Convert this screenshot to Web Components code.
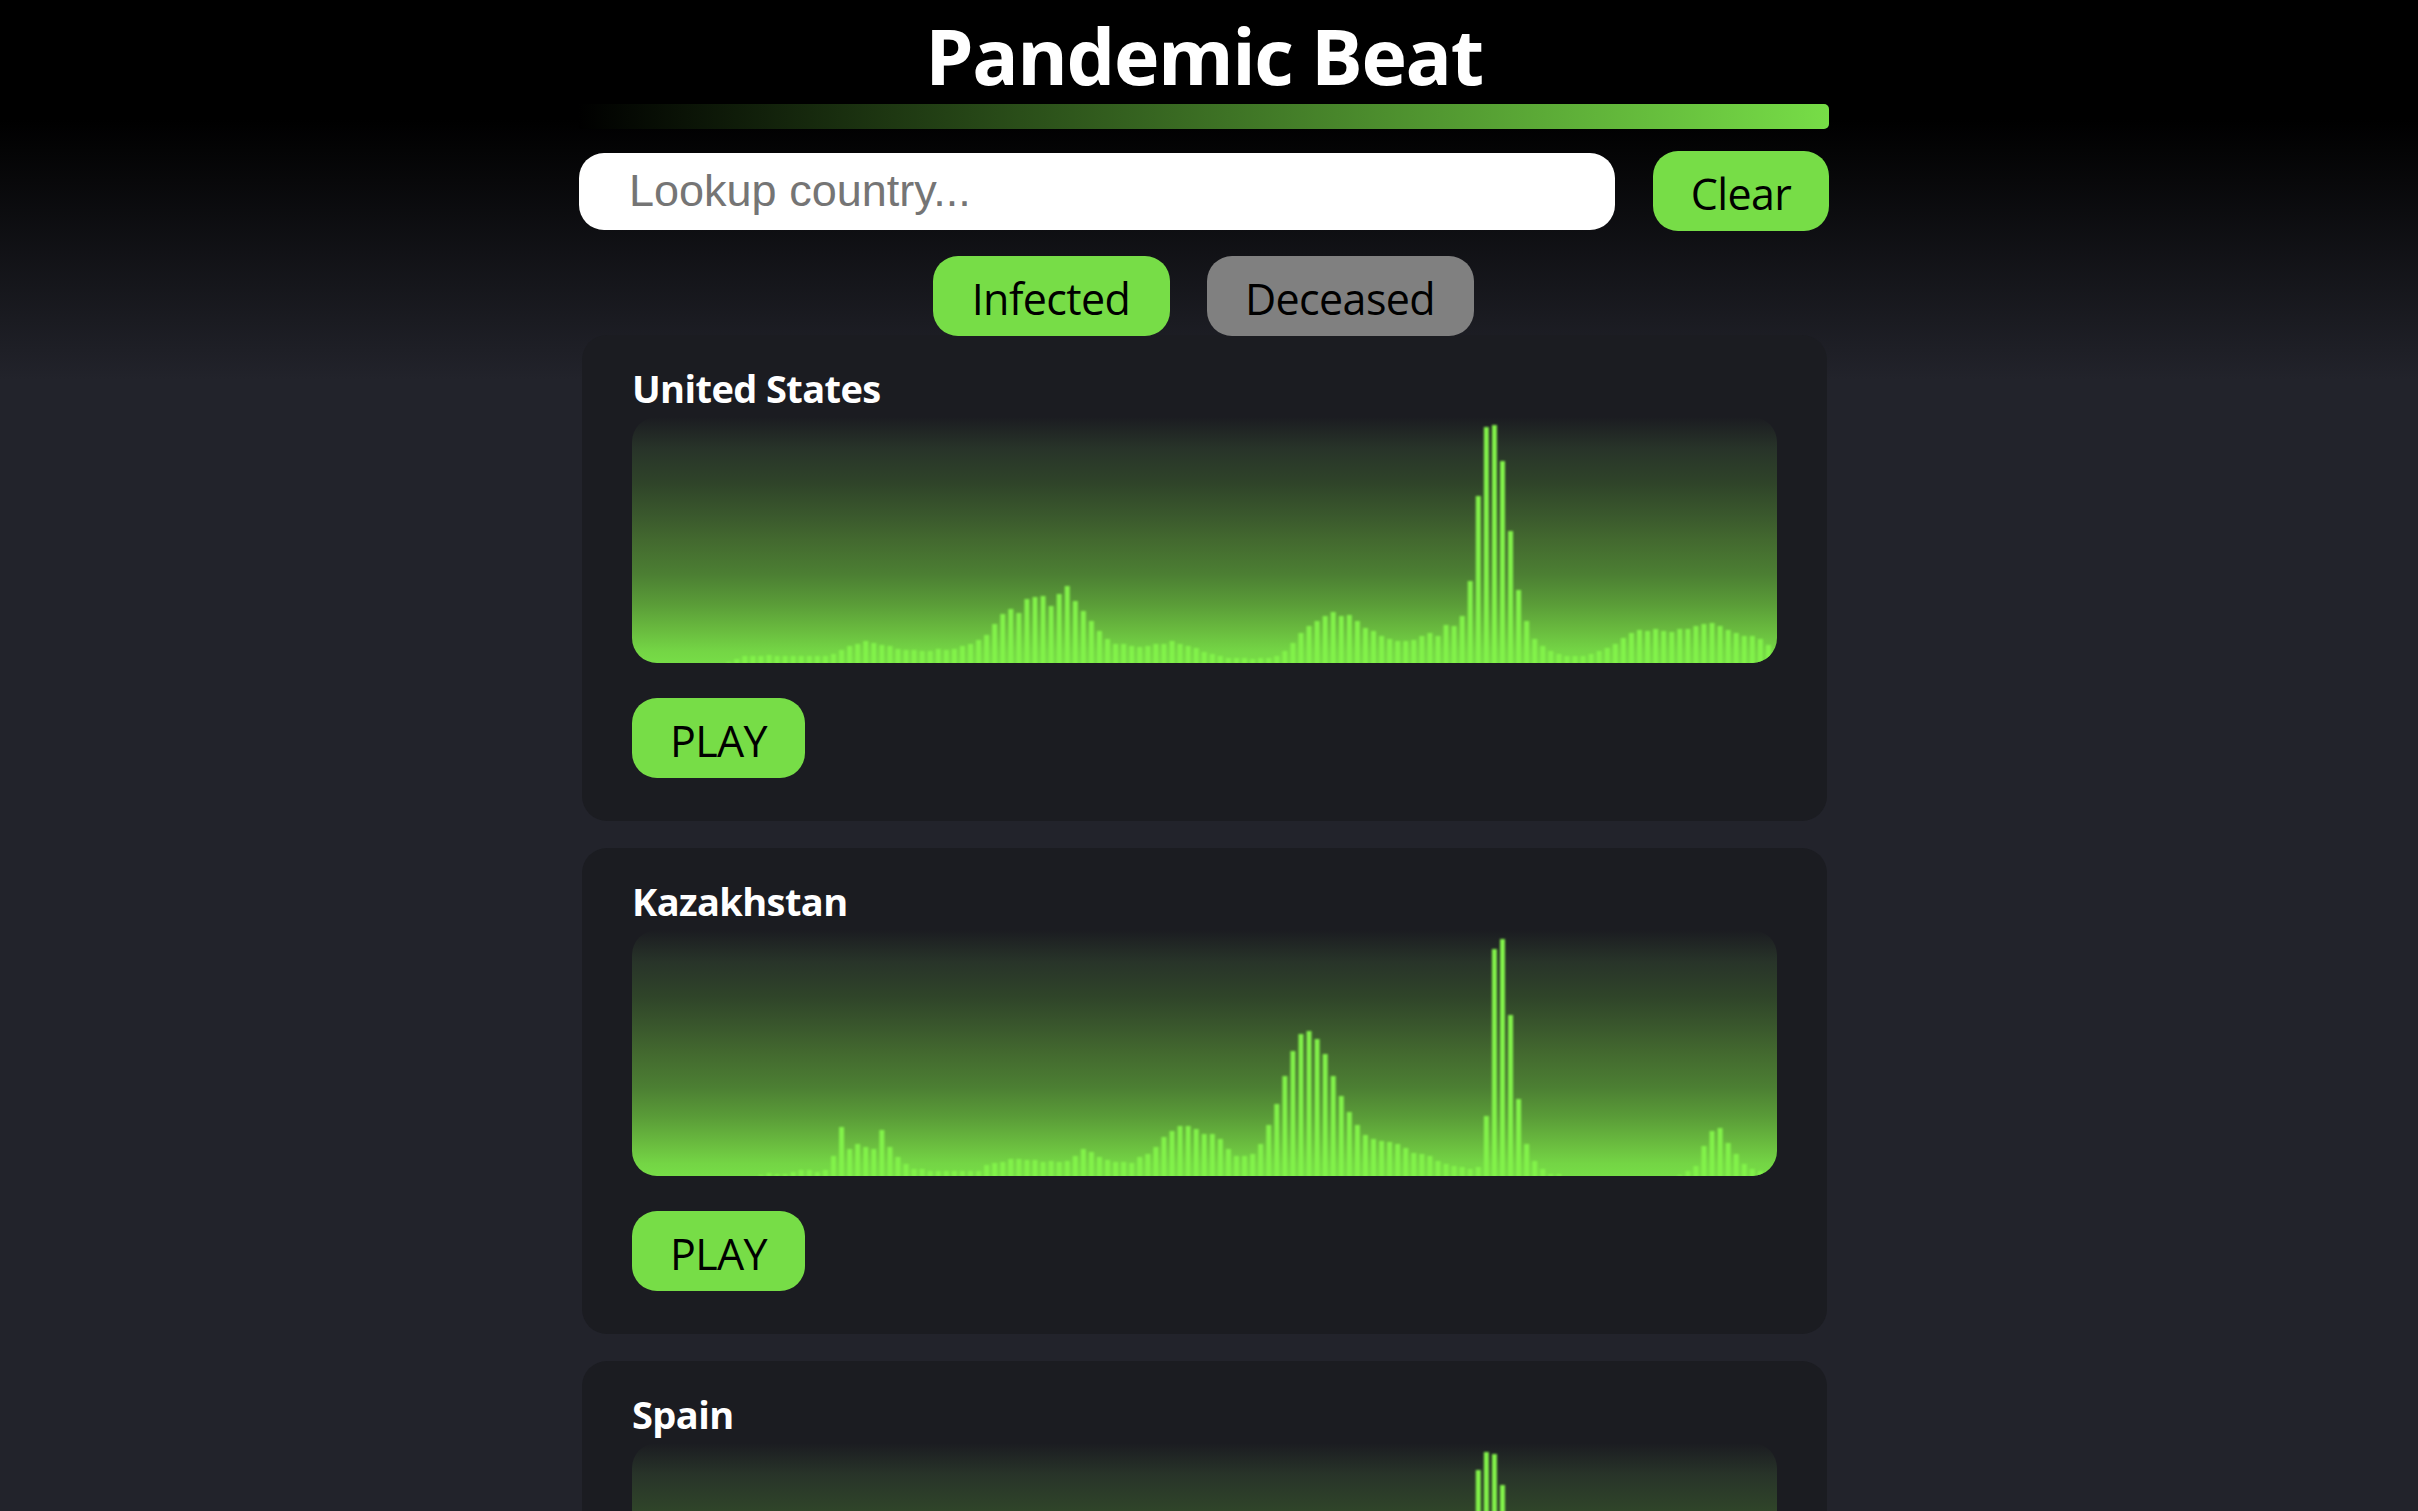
<!DOCTYPE html>
<html lang="en">
<head>
<meta charset="utf-8">
<title>Pandemic Beat</title>
<style>
    html, body { height: 100%; overflow: hidden; }
    body {
        margin: 0;
        padding-right: 10px;
        box-sizing: border-box;
        background: linear-gradient(#000 120px, #22232b 380px);
        color: #fff;
        font-family: "Open Sans", "Noto Sans", sans-serif;
    }
</style>
</head>
<body>
<pandemic-app>
    <search-bar></search-bar>
    <tab-row>
        <pill-button style="width:237px">Infected</pill-button>
        <pill-button muted style="width:267px">Deceased</pill-button>
    </tab-row>
    <country-card name="United States">
        <beat-chart start="12" bars="1 4 7 7 7 8 7 7 7 7 7 7 7 9 13 17 19 22 20 18 17 14 13 13 12 12 14 13 14 17 19 23 28 39 49 54 50 64 66 67 57 69 77 62 52 42 32 24 19 19 17 16 17 19 19 22 19 17 15 11 9 7 5 5 5 4 5 5 7 12 20 30 37 42 47 51 47 48 42 35 32 27 24 22 22 23 27 30 27 38 37 47 82 167 236 238 202 132 73 42 24 17 12 9 7 7 7 9 12 15 19 25 30 33 32 34 32 31 34 34 37 39 40 37 33 30 27 27 24 18"></beat-chart>
        <pill-button slot="action" style="width:173px">PLAY</pill-button>
    </country-card>
    <country-card name="Kazakhstan">
        <beat-chart start="15" bars="0 1 3 2 2 4 6 6 4 6 20 49 27 32 29 27 46 29 19 12 7 7 5 5 5 5 5 5 5 11 13 14 17 17 16 16 14 15 14 15 20 27 24 19 16 14 14 13 19 22 29 39 45 50 50 47 42 42 37 27 20 20 22 32 51 72 100 125 142 145 137 122 100 80 64 51 41 37 35 34 32 28 23 22 20 15 12 10 9 7 9 60 227 237 161 77 32 15 7 2 2 0 0 0 0 0 0 0 0 0 0 0 0 0 0 1 5 10 30 45 48 33 22 12 7 5 3"></beat-chart>
        <pill-button slot="action" style="width:173px">PLAY</pill-button>
    </country-card>
    <country-card name="Spain">
        <beat-chart start="105" bars="219 237 235 204"></beat-chart>
    </country-card>
</pandemic-app>

<script>
class PandemicApp extends HTMLElement {
    constructor() {
        super();
        this.attachShadow({ mode: 'open' });
        this.shadowRoot.innerHTML = `
            <style>
                :host {
                    display: block;
                    width: 1250px;
                    margin: 0 auto;
                }
                h1 {
                    margin: 0;
                    height: 104px;
                    font-size: 77px;
                    font-weight: 700;
                    line-height: 112px;
                    letter-spacing: -1.4px;
                    text-align: center;
                    color: #fff;
                }
                .rule {
                    height: 25px;
                    border-radius: 0 5px 5px 0;
                    background: linear-gradient(to right, #000, #77dd47);
                }
            </style>
            <h1>Pandemic Beat</h1>
            <div class="rule"></div>
            <slot></slot>
        `;
    }
}

class SearchBar extends HTMLElement {
    constructor() {
        super();
        this.attachShadow({ mode: 'open' });
        this.shadowRoot.innerHTML = `
            <style>
                :host {
                    display: flex;
                    align-items: center;
                    justify-content: space-between;
                    margin-top: 22px;
                }
                input {
                    width: 1036px;
                    height: 77px;
                    box-sizing: border-box;
                    padding: 0 0 0 50px;
                    border: 0;
                    border-radius: 25px;
                    background: #fff;
                    font: 45px "Liberation Sans", Arial, sans-serif;
                }
            </style>
            <input type="text" placeholder="Lookup country...">
            <pill-button style="width:176px">Clear</pill-button>
        `;
    }
}

class TabRow extends HTMLElement {
    constructor() {
        super();
        this.attachShadow({ mode: 'open' });
        this.shadowRoot.innerHTML = `
            <style>
                :host {
                    display: flex;
                    justify-content: center;
                    gap: 37px;
                    position: relative;
                    z-index: 1;
                    margin: 25px 0 -1px;
                    padding-right: 2px;
                }
            </style>
            <slot></slot>
        `;
    }
}

class PillButton extends HTMLElement {
    constructor() {
        super();
        this.attachShadow({ mode: 'open' });
        this.shadowRoot.innerHTML = `
            <style>
                :host {
                    display: inline-flex;
                    align-items: center;
                    justify-content: center;
                    height: 80px;
                    box-sizing: border-box;
                    padding-top: 5px;
                    border-radius: 25px;
                    background: #77dd47;
                    color: #000;
                    font-size: 43px;
                    letter-spacing: -.6px;
                    cursor: pointer;
                }
                :host([muted]) { background: #808080; }
            </style>
            <slot></slot>
        `;
    }
}

class CountryCard extends HTMLElement {
    constructor() {
        super();
        this.attachShadow({ mode: 'open' });
        this.shadowRoot.innerHTML = `
            <style>
                :host {
                    display: block;
                    margin: 0 2px 27px 3px;
                    padding: 0 50px 43px;
                    border-radius: 25px;
                    background: #1b1c21;
                }
                h2 {
                    margin: 0;
                    height: 82px;
                    font-size: 38px;
                    font-weight: 700;
                    line-height: 106px;
                    letter-spacing: -.6px;
                    color: #fff;
                }
                ::slotted([slot="action"]) { margin-top: 35px; }
            </style>
            <h2></h2>
            <slot></slot>
            <slot name="action"></slot>
        `;
    }

    connectedCallback() {
        this.shadowRoot.querySelector('h2').textContent = this.getAttribute('name');
    }
}

// Draws the per-day bars over the fade; heights are in px from the chart floor
class BeatChart extends HTMLElement {
    constructor() {
        super();
        this.attachShadow({ mode: 'open' });
        this.shadowRoot.innerHTML = `
            <style>
                :host {
                    display: block;
                    height: 246px;
                    border-radius: 25px;
                    overflow: hidden;
                    background: linear-gradient(#1b1c21, #283429 13%, #2f4429 27%, #3b5a2d 41%, #43692f 50%, #4c7f33 64%, #5a9c38 76%, #6abc3f 87%, #74d545 95%, #77dd47);
                }
                svg { display: block; width: 100%; height: 100%; }
                g { fill: #82f24a; filter: blur(.8px); }
            </style>
            <svg viewBox="0 0 1145 246"><g></g></svg>
        `;
    }

    connectedCallback() {
        const start = parseInt(this.getAttribute('start') || '0');
        const bars = (this.getAttribute('bars') || '').trim().split(/\s+/).map(Number);
        const pitch = 8.06;
        const width = 5;
        const g = this.shadowRoot.querySelector('g');
        bars.forEach((h, i) => {
            if (!h) return;
            const rect = document.createElementNS('http://www.w3.org/2000/svg', 'rect');
            rect.setAttribute('x', (start + i) * pitch - width / 2);
            rect.setAttribute('y', 246 - h);
            rect.setAttribute('width', width);
            rect.setAttribute('height', h + 4);
            g.appendChild(rect);
        });
    }
}

customElements.define('pill-button', PillButton);
customElements.define('tab-row', TabRow);
customElements.define('search-bar', SearchBar);
customElements.define('beat-chart', BeatChart);
customElements.define('country-card', CountryCard);
customElements.define('pandemic-app', PandemicApp);
</script>
</body>
</html>
